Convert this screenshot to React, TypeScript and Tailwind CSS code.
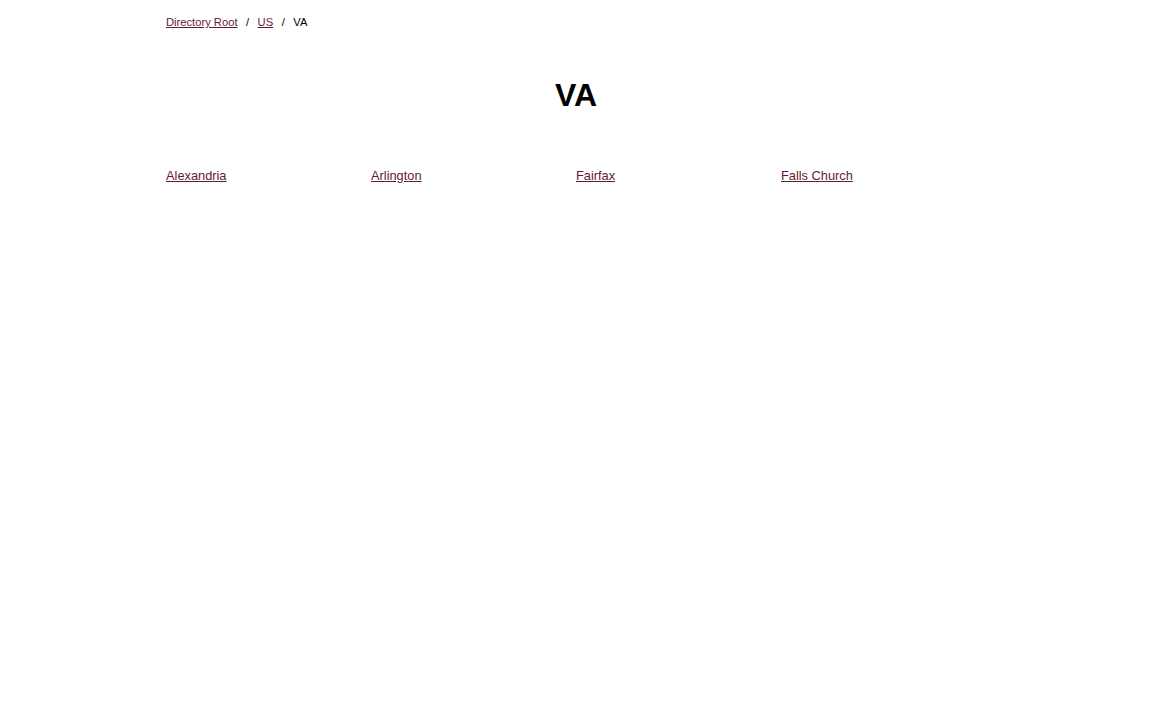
const cities = ['Alexandria', 'Arlington', 'Fairfax', 'Falls Church']

export default function App() {
    return (
        <div className="min-h-screen w-full bg-white text-black" style={{ fontFamily: '"Liberation Sans", Arial, sans-serif' }}>
            <div className="mx-auto w-[820px]">
                {/* Breadcrumb */}
                <nav className="flex items-center gap-[8.5px] pt-[15px] text-[11.2px] leading-[14px]">
                    <a href="#" className="text-[#641a30] underline">Directory Root</a>
                    <span>/</span>
                    <a href="#" className="text-[#641a30] underline">US</a>
                    <span>/</span>
                    <span>VA</span>
                </nav>

                <h1 className="mt-[48px] text-center text-[32px] font-bold leading-[37px]">VA</h1>

                {/* City list */}
                <div className="mt-[54px] grid grid-cols-4 text-[12.8px] leading-[16px]">
                    {cities.map(c => (
                        <div key={c}>
                            <a href="#" className="text-[#641a30] underline">{c}</a>
                        </div>
                    ))}
                </div>
            </div>
        </div>
    )
}
